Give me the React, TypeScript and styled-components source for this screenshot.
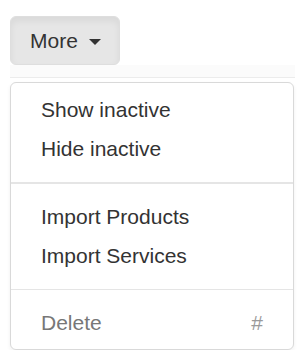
import React from "react";
import styled, { createGlobalStyle } from "styled-components";

const Global = createGlobalStyle`
  html, body { margin: 0; padding: 0; background: #ffffff; }
  body { font-family: "Liberation Sans", Arial, Helvetica, sans-serif; color: #333333; }
`;

const Page = styled.div`
  padding: 16px 0 0 10px;
  width: 295px;
  box-sizing: border-box;
`;

const Button = styled.button`
  display: inline-flex;
  align-items: center;
  box-sizing: border-box;
  height: 49px;
  width: 110px;
  padding: 0 0 0 19px;
  margin: 0;
  font-family: inherit;
  font-size: 21px;
  line-height: 30px;
  color: #333333;
  background: #e6e6e6;
  border: 1px solid #dedede;
  border-radius: 6px;
  box-shadow: inset 0 4px 7px rgba(0, 0, 0, 0.06);
  cursor: pointer;
`;

const Caret = styled.span`
  display: inline-block;
  width: 0;
  height: 0;
  margin: 3px 0 0 11px;
  border-top: 6px solid #333333;
  border-left: 6px solid transparent;
  border-right: 6px solid transparent;
`;

const Band = styled.div`
  width: 285px;
  height: 12px;
  background: #fbfbfb;
  border-bottom: 1px solid #ececec;
`;

const Menu = styled.ul`
  list-style: none;
  box-sizing: border-box;
  width: 284px;
  margin: 4px 0 0 0;
  padding: 7.5px 0 6px;
  background: #ffffff;
  border: 1px solid #d9d9d9;
  border-radius: 6px;
  box-shadow: 0 2px 4px rgba(0, 0, 0, 0.06);
`;

const Item = styled.li<{ $disabled?: boolean }>`
  display: flex;
  justify-content: space-between;
  padding: 4.5px 30px;
  font-size: 21px;
  line-height: 30px;
  color: ${(p) => (p.$disabled ? "#777777" : "#333333")};
  white-space: nowrap;
`;

const Hint = styled.span`
  color: #9a9a9a;
`;

const Divider = styled.li`
  height: 1.5px;
  margin: 13.5px 0;
  background: #e5e5e5;
`;

export default function App() {
  return (
    <>
      <Global />
      <Page>
        <Button type="button">
          More
          <Caret />
        </Button>
        <Band />
        <Menu>
          <Item>Show inactive</Item>
          <Item>Hide inactive</Item>
          <Divider />
          <Item>Import Products</Item>
          <Item>Import Services</Item>
          <Divider />
          <Item $disabled>
            Delete
            <Hint>#</Hint>
          </Item>
        </Menu>
      </Page>
    </>
  );
}
